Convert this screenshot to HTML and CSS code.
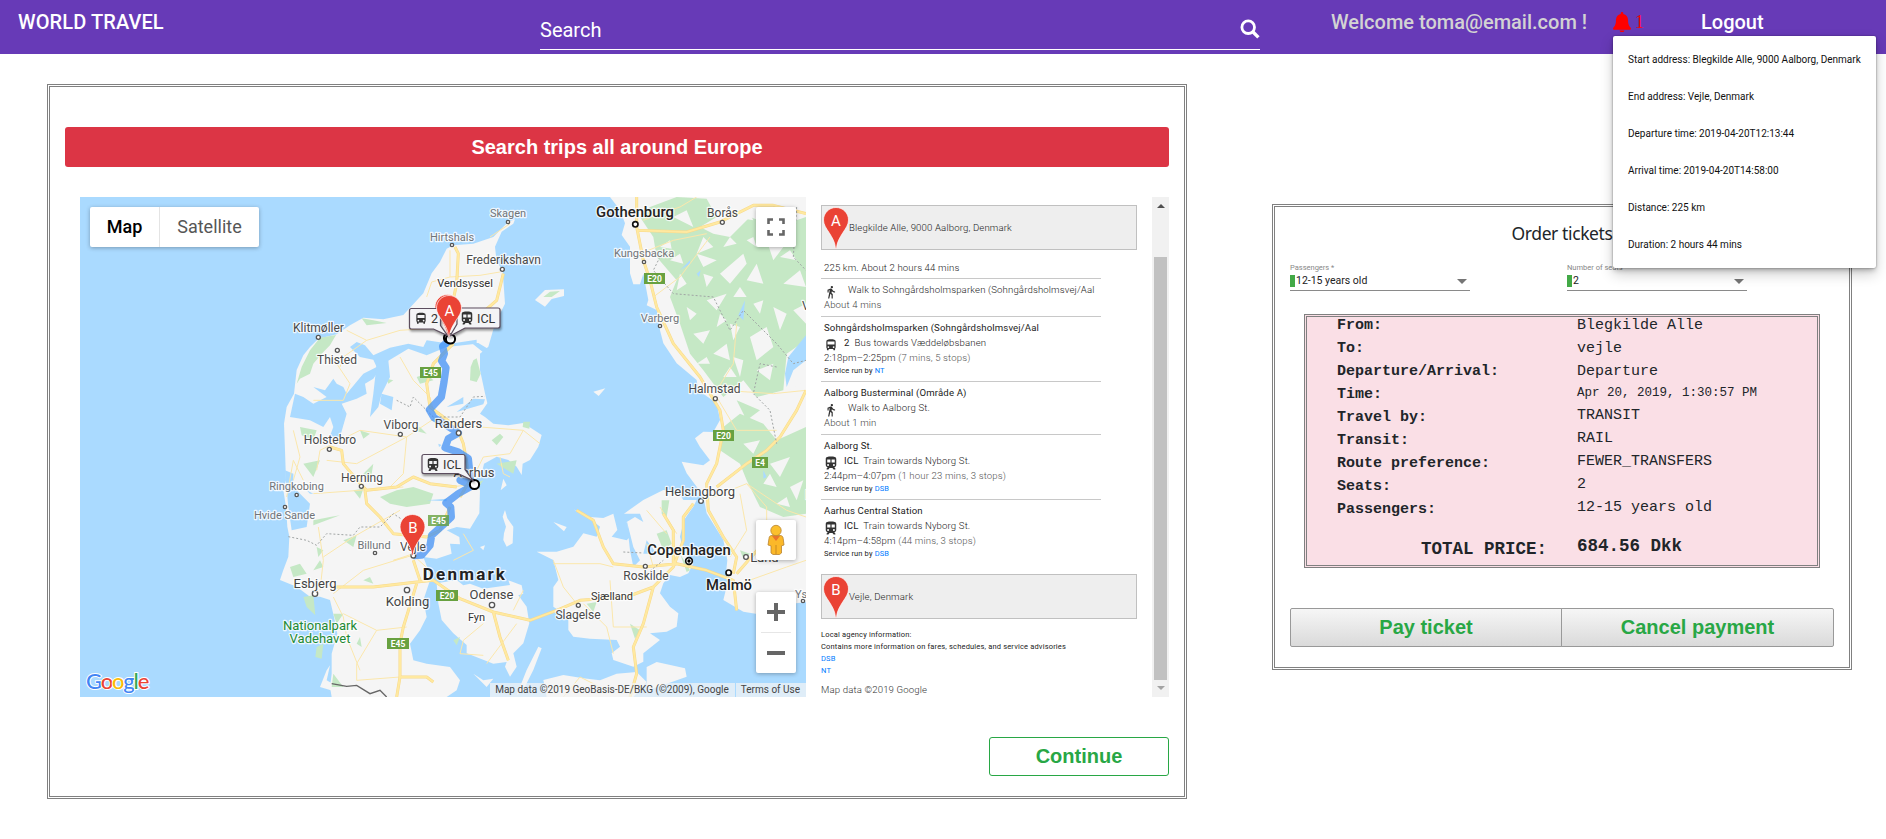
FILE: index.html
```html
<!DOCTYPE html>
<html lang="en">
<head>
<meta charset="utf-8">
<title>World Travel</title>
<link rel="stylesheet" href="styles.css">
</head>
<body>
<svg width="0" height="0" class="defs">
  <defs>
    <symbol id="bus" viewBox="0 0 24 24"><path d="M4 16c0 .9.4 1.700 1 2.200V20c0 .6.4 1 1 1h1c.6 0 1-.4 1-1v-1h8v1c0 .6.4 1 1 1h1c.6 0 1-.4 1-1v-1.800c.6-.5 1-1.300 1-2.200V6c0-3.500-3.600-4-8-4s-8 .5-8 4v10zm3.500 1a1.500 1.500 0 1 1 0-3 1.500 1.500 0 0 1 0 3zm9 0a1.500 1.500 0 1 1 0-3 1.500 1.500 0 0 1 0 3zM18 11H6V6h12v5z"/></symbol>
    <symbol id="train" viewBox="0 0 24 24"><path d="M3 15.500C3 17.400 4.600 19 6.500 19L4.500 21.500v1.500h3l2-2.500h5l2 2.500h3v-1.500L17.500 19c1.900 0 3.500-1.600 3.500-3.500V5c0-3.500-4-4-9-4s-9 .5-9 4v10.500zM7 17a1.700 1.700 0 1 1 0-3.400A1.700 1.700 0 0 1 7 17zm10 0a1.700 1.700 0 1 1 0-3.400 1.700 1.700 0 0 1 0 3.400zM11 11H5.500V6H11v5zm7.500 0H13V6h5.500v5z"/></symbol>
    <symbol id="walk" viewBox="0 0 24 24"><path d="M13.500 5.500a2 2 0 1 0 0-4 2 2 0 0 0 0 4zM9.800 8.900L7 23h2.100l1.800-8 2.100 2v6h2v-7.500l-2.100-2 .6-3C14.800 12 16.800 13 19 13v-2c-1.900 0-3.500-1-4.300-2.400l-1-1.600c-.4-.6-1-1-1.700-1-.3 0-.5.1-.8.1L6 8.300V13h2V9.600l1.800-.7"/></symbol>
    <symbol id="pin" viewBox="0 0 26 42"><path d="M13 .5C6 .5.5 6 .5 13c0 4.500 2.500 8 5.500 12.500 3.500 5.500 6 9.500 6.500 16h1c.5-6.500 3-10.500 6.500-16C23 21 25.500 17.500 25.500 13 25.500 6 20 .5 13 .5z" fill="#ea4335" stroke="#fff" stroke-width=".7"/></symbol>
  </defs>
</svg>

<header class="topbar">
  <div class="brand">WORLD TRAVEL</div>
  <div class="search">
    <span>Search</span>
    <svg class="search-icon" viewBox="0 0 20 20"><circle cx="8.200" cy="8.200" r="6.300" fill="none" stroke="#fff" stroke-width="2.800"/><path d="M12.800 12.800L18.400 18.400" stroke="#fff" stroke-width="3.400"/></svg>
  </div>
  <div class="welcome">Welcome toma@email.com !</div>
  <div class="bell">
    <svg viewBox="0 0 18 20"><path d="M9 0c-.8 0-1.300.6-1.300 1.300v.6C4.800 2.500 3 4.800 3 7.600c0 5-1.200 6.500-2.500 8-.9 1-.3 2.200.7 2.200h15.600c1 0 1.600-1.200.7-2.200-1.300-1.500-2.500-3-2.500-8 0-2.800-1.800-5.100-4.700-5.700v-.6C10.300.6 9.800 0 9 0zM6.600 18.600a2.400 1.600 0 0 0 4.800 0z" fill="red"/></svg>
    <span>1</span>
    <div class="menu">
      <div>Start address: Blegkilde Alle, 9000 Aalborg, Denmark</div>
      <div>End address: Vejle, Denmark</div>
      <div>Departure time: 2019-04-20T12:13:44</div>
      <div>Arrival time: 2019-04-20T14:58:00</div>
      <div>Distance: 225 km</div>
      <div>Duration: 2 hours 44 mins</div>
    </div>
  </div>
  <div class="logout">Logout</div>
</header>

<main class="page">
  <section class="trips">
    <h1 class="banner">Search trips all around Europe</h1>
    <div class="trip-body">
      <div class="map">
        <svg class="map-art" width="726" height="500" viewBox="0 0 726 500">
          <rect width="726" height="500" fill="#aadaff"/>
          <g transform="scale(.33333)">
            <g fill="#f5f5f5">
              <path d="M1305 67L1285 74 1240 120 1180 140 1120 145 1100 155 1080 195 1055 229 1030 289 970 354 910 367 850 362 810 385 770 412 715 425 690 450 670 475 650 519 642 590 620 630 612 680 615 760 618 850 610 879 618 929 622 989 628 1019 625 1079 610 1119 600 1149 650 1169 690 1199 720 1199 750 1209 762 1260 772 1310 755 1370 755 1430 750 1470 755 1500H1100L1130 1480 1140 1450 1110 1410 1040 1400 1000 1390 990 1340 1020 1300 1040 1260 1030 1210 1040 1180 1050 1150 1045 1120 1030 1080 1070 1085 1115 1070 1110 1040 1140 1042 1138 1020 1100 1000 1130 990 1170 995 1198 949 1200 880 1185 850 1205 830 1212 800 1250 779 1285 789 1310 809 1325 834 1328 800 1350 789 1375 749 1385 714 1330 678 1285 685 1240 680 1215 660 1200 650 1222 619 1215 589 1200 519 1200 470 1225 449 1245 380 1275 320 1268 219 1250 194 1245 149 1265 104 1300 80Z"/>
              <path d="M1070 1159L1130 1149 1150 1165 1170 1160 1210 1175 1290 1164 1285 1150 1325 1165 1330 1190 1315 1195 1340 1229 1348 1279 1330 1339 1300 1369 1310 1409 1290 1439 1275 1409 1280 1395 1240 1400 1160 1369 1160 1344 1120 1309 1085 1269 1075 1219Z"/>
              <path d="M1375 1349L1385 1354 1360 1419 1330 1479 1310 1495 1340 1419ZM1275 939L1282 964 1300 989 1298 1039 1280 1049 1270 1029 1272 1009 1278 989 1268 959ZM1270 845L1280 865 1262 880ZM1365 309L1395 279 1452 277 1452 297 1415 306 1395 329ZM1540 584L1576 574 1556 597ZM1420 975L1460 990 1452 1003ZM1200 1050L1215 1045 1210 1060ZM740 1420L750 1405 740 1450 790 1480 770 1485 720 1470ZM1180 1430L1210 1450 1240 1445 1220 1470Z"/>
              <path d="M1480 937L1530 960 1570 963 1600 950 1612 999 1595 1019 1640 1030 1650 1020 1640 975 1665 960 1690 975 1680 950 1632 950 1690 909 1750 879 1795 885 1810 909 1850 909 1840 929 1812 969 1800 1019 1810 1059 1840 1099 1825 1129 1800 1140 1770 1134 1750 1159 1740 1189 1770 1229 1795 1249 1790 1289 1760 1304 1710 1309 1740 1329 1690 1369 1690 1394 1660 1409 1600 1389 1595 1369 1620 1349 1610 1329 1530 1325 1480 1319 1465 1299 1465 1260 1450 1249 1420 1229 1420 1170 1435 1149 1420 1089 1370 1064 1430 1064 1480 1049 1510 1009 1550 1019 1560 989 1535 969Z"/>
              <path d="M1390 1449L1450 1434 1510 1444 1560 1450 1610 1430 1670 1425 1700 1455 1660 1500H1400ZM1700 1410L1730 1395 1815 1414 1820 1439 1750 1464 1700 1480Z"/>
              <path d="M1590 0L1620 39 1635 79 1625 114 1650 149 1650 229 1660 262 1680 262 1690 230 1705 309 1700 325 1730 339 1740 400 1750 439 1790 499 1850 549 1855 580 1910 619 1920 669 1900 705 1870 704 1845 724 1860 750 1890 790 1870 805 1805 794 1820 829 1850 869 1870 899 1880 949 1930 1029 1942 1089 1938 1129 1945 1149 1930 1209 1990 1244 2050 1254 2100 1225 2178 1215V0Z"/>
            </g>
            <g fill="#c5e8c5">
              <path d="M1790 0L1880 5 1910 60 1860 90 1900 110 1950 120 2010 60 2090 90 2178 60V430L2120 470 2110 580 2030 600 1990 550 1930 600 1870 520 1830 470 1800 380 1770 300 1790 250 1730 180 1720 120 1680 60 1710 30Z"/>
              <path d="M1930 690L1980 650 2050 680 2090 730 2178 690V950L2110 960 2040 930 2000 850 1980 800 1920 760ZM1970 610L2040 640 2000 670Z"/>
              <path d="M720 422L768 414 750 445 725 470 700 500 690 530 660 545 650 560 665 510 690 460ZM845 364L880 370 920 378 860 385ZM1180 490L1190 484 1202 530 1190 555 1170 550 1172 510Z"/>
              <path d="M660 690L710 700 700 730 665 715ZM670 800L720 790 700 840ZM850 830L880 800 870 860ZM900 900L950 880 1000 870 1060 890 1050 920 980 930 930 920ZM700 970L750 960 780 955 700 985ZM790 1030L830 1015 820 1050ZM630 1110L660 1100 680 1130 640 1140ZM670 1200L700 1195 706 1255 680 1230ZM710 1350L730 1340 725 1385 706 1380ZM760 1430L790 1470 755 1470ZM760 1250L790 1250 770 1280ZM820 880L850 875 840 905ZM710 1050L730 1060 715 1080ZM1235 730L1260 710 1270 720 1250 745ZM1330 674L1350 674 1348 695 1328 690ZM1250 800L1310 790 1300 830ZM1745 910L1768 910 1760 960 1745 950ZM1520 1220L1550 1215 1540 1245ZM1650 1280L1680 1300 1665 1325ZM1210 55L1220 60ZM1240 100L1250 110ZM1010 540L1040 530 1060 550 1020 560ZM1800 1070L1830 1120 1820 1125ZM840 700L870 710 850 725ZM920 545L940 550 925 560ZM1390 300L1410 284 1440 282 1415 300Z"/>
              <path d="M1730 1010L1760 1000 1775 1040 1750 1060ZM880 520L900 500 905 520ZM1000 700L1020 690 1040 710ZM1180 860L1210 850 1190 880ZM700 1120L720 1090 730 1110ZM850 1150L870 1140 880 1160ZM1980 1060L2010 1070 1990 1085ZM1120 1330L1140 1320 1130 1345ZM1400 1200L1420 1215ZM830 1340L840 1320 845 1350Z"/>
            </g>
            <g fill="#f5f5f5">
              <path d="M1850 170l60 20-40 20zM1920 230l70-60 10 30-50 60zM1780 60l40-20 20 50zM2000 250l30-50 20 60zM2060 130l50 20-30 40zM2110 260l50-40 18 50zM1880 310l60-20-30 50zM1950 380l30 10-20 40zM1840 410l50-10-20 40zM1900 470l40-30 10 50zM2010 420l50-30 20 60-50 40zM2080 330l40 20-20 50zM2030 520l50-20-10 50zM1800 230l20 30-30 20zM1870 120l30 30-50 20zM2130 490l48-60v120l-50 30zM1990 740l50-10-20 40zM2070 800l60-20-30 60zM2130 870l40-20-20 60zM1960 480l30 10-10 50zM2060 20l60 20-30 40zM1960 60l40-30 20 40zM1930 150l20-30 20 20zM2020 320l30-10-10 40zM1820 330l30 20-20 20zM1920 350l20 20-30 20z"/>
              <path d="M2100 180l30-20 20 30zM2140 340l38-20v60zM1770 190l30-20 10 30zM1870 230l30 10-20 30zM1960 300l20-30 20 30zM1740 150l30-20 5 25zM2000 130l20-10 10 30zM1850 500l30-20 10 20zM1930 540l20-30 20 30zM2050 860l20-30 20 40zM2090 920l30-20 10 30z"/>
            </g>
            <g fill="#aadaff">
              <path d="M1190 428L1110 440 1040 430 1030 450 985 440 930 452 880 475 855 445 830 435 810 450 840 480 880 488 890 510 850 530 825 560 800 590 790 570 770 560 760 545 735 580 700 570 740 600 700 620 670 600 645 590 630 660 690 670 730 690 750 660 760 690 745 730 780 720 800 650 785 620 830 605 860 590 855 560 880 545 910 500 960 470 985 455 1040 475 1100 450 1190 440Z"/>
              <path d="M890 500L925 490 930 540 905 590 895 630 870 660 880 590ZM905 590L940 600 935 640 900 620ZM1175 438L1195 438 1240 465 1215 470ZM1130 645L1180 605 1215 607 1210 622ZM615 820L640 830 640 870 690 920 680 990 635 1000 625 930ZM690 890L680 880 700 890ZM1100 630L1150 600 1150 620Z"/>
              <path d="M1640 970L1660 1050 1680 1090 1660 1110 1650 1060ZM1700 1030L1730 1070 1690 1070ZM1975 355L1995 310 1990 370ZM2115 530L2125 480 2178 415V490L2140 520 2120 570ZM1800 220L1830 190 1830 200ZM2050 820l10 20-10 5zM1850 230l12-10-5 20zM1870 1050l10 30-8 10zM1040 910l60-5v8zM1075 740l10 4-8 6z"/>
            </g>
            <g class="roads-minor">
              <path d="M1110 160V240L1055 255 1040 300M1110 240L1200 235 1260 225M1230 120L1290 80M800 400L860 430 960 400 1040 395M860 430L790 480 780 510M770 500L810 560 790 610 700 610M960 480L1000 550 1050 600 1060 640M710 820L720 760 840 700 980 720M980 720L1070 660M980 720L970 830 930 870M980 720L830 800 740 790M700 890L840 880 970 870M715 990L730 1090 720 1180M730 1080L820 1020 960 940M760 1190L850 1120 980 1080M760 1200L790 1260 800 1320 840 1420M790 1250L890 1300 980 1290M890 1300L830 1400 830 1450 960 1440M1000 1070L940 1090 1000 1075 1060 1130M620 900L640 790 670 850M1100 680L1200 690 1330 700 1380 740M1170 860L1210 780 1290 770 1330 700M1110 870L1200 860M1150 1010L1180 1060 1120 1090M1210 1280L1150 1330 1140 1370 1210 1375M1310 1280L1220 1400M1330 1180L1300 1240M1420 1100L1560 1100 1600 1110M1420 1090L1450 1170 1490 1220M1590 1150L1600 1290 1700 1290M1510 1220L1580 1290 1600 1370M1740 930L1790 1010M1700 940L1760 1010M1450 1500L1500 1440 1560 1470M2178 580L2080 590 1930 580M1690 70L1740 50 1800 30 1850 0M1680 170L1780 130 1880 110M1720 300L1800 240 1890 120M1910 580L1960 500 1970 380M1910 600L1970 700 2090 700M1900 900L2000 860 2060 930 2060 1090M2000 860L2120 940 2178 960M1950 1080L2000 1000 1980 890M1980 1160L2120 1110 2178 1090M1700 1040L1720 1110M1260 780L1270 830 1290 840M640 700L660 780 640 850"/>
            </g>
            <g class="roads-case"><path id="r1" d="M1125 150L1135 170 1130 260 1115 330M1270 230L1250 310 1210 345 1150 370M1120 440L1060 500 1040 560 1050 630 1130 690 1150 740 1170 850 1140 900M750 750L785 760 790 800 840 860 860 880 950 870 1000 840 1050 860 1130 870M855 880L860 920 900 960 940 1010 1040 1020 1080 1000 1110 930M760 1170L880 1170 1010 1155 1060 1150 1140 1205 1240 1245 1350 1270 1430 1240 1500 1210 1640 1200 1720 1170M1010 1160L970 1290 960 1340 960 1440 950 1500M960 1440L1040 1440 1060 1455M1000 1090L1020 1150M1240 1245L1260 1320 1285 1390M1490 940L1540 970 1570 1050 1600 1100 1690 1110 1790 1100 1880 1120 1960 1150 1970 1240M1840 920L1810 960 1810 1030 1780 1110 1720 1170 1690 1280 1660 1350 1670 1430 1650 1500M1750 950L1780 1000 1780 1100M1670 0L1670 90 1690 190 1710 250 1730 330 1780 440 1860 540 1920 640 1930 700 1910 800 1880 860 1885 940 1930 1020 1970 1080 1960 1130M1670 100L1820 105 1920 75 2020 25 2080 25 2178 50M1910 870L2000 800 2060 760 2100 720 2150 640 2178 580M1970 1130L2040 1050"/></g>
            <use href="#r1" class="roads"/>
            <path class="boundary" d="M625 1019L680 1030 710 1045 740 1010 820 1015 840 990 900 990 940 950 1000 990M950 610L990 630 1000 600 1060 660 1140 660 1180 600 1215 598M1740 180L1720 220 1780 290 1900 300 1950 400 1990 340 2090 440 2140 500 2178 490M2150 30L2140 180 2178 220M2090 510L2040 500 2020 590 2070 640 2090 740M1700 1130L1750 1090M1630 1065L1690 1068"/>
            <path d="M755 1460L800 1468 830 1465 870 1490 900 1480 920 1500" fill="none" stroke="#666" stroke-width="4"/>
            <path class="route" d="M1108 430L1088 448 1093 470 1085 492 1098 512 1092 555 1084 600 1070 615 1048 638 1062 662 1100 685 1135 708 1105 725 1095 752 1135 765 1165 785 1172 850 1140 850 1178 866 1135 890 1098 918 1112 930 1114 960 1088 985 1055 1015 1050 1045 1025 1074 1000 1076"/>
            <g fill="#fff" stroke="#555" stroke-width="4">
              <circle cx="1284" cy="75" r="5"/><circle cx="1116" cy="144" r="5"/><circle cx="1267" cy="217" r="6"/><circle cx="715" cy="421" r="6"/><circle cx="772" cy="460" r="6"/><circle cx="961" cy="712" r="6"/><circle cx="1136" cy="708" r="7"/><circle cx="748" cy="757" r="6"/><circle cx="844" cy="868" r="6"/><circle cx="650" cy="894" r="5"/><circle cx="615" cy="930" r="5"/><circle cx="885" cy="1068" r="5"/><circle cx="705" cy="1190" r="8"/><circle cx="981" cy="1179" r="8"/><circle cx="1236" cy="1224" r="8"/><circle cx="1495" cy="1225" r="6"/><circle cx="1696" cy="1108" r="6"/><circle cx="1863" cy="912" r="7"/><circle cx="1998" cy="1080" r="7"/><circle cx="2169" cy="1212" r="5"/><circle cx="1906" cy="605" r="6"/><circle cx="1740" cy="387" r="5"/><circle cx="1692" cy="195" r="5"/><circle cx="1927" cy="76" r="6"/><circle cx="1000" cy="1076" r="7"/>
            </g>
            <g fill="#fff" stroke="#111" stroke-width="5"><circle cx="1666" cy="82" r="8"/><circle cx="1946" cy="1127" r="8"/><circle cx="1827" cy="1092" r="10"/></g>
            <circle cx="1827" cy="1092" r="5"/>
          </g>
          <g class="labels">
            <text x="428" y="20" class="s">Skagen</text><text x="372" y="44" class="s">Hirtshals</text><text x="423.500" y="67">Frederikshavn</text><text x="385" y="90" class="n">Vendsyssel</text>
            <text x="238.500" y="135">Klitmøller</text><text x="257" y="167">Thisted</text><text x="321" y="232">Viborg</text><text x="378.500" y="231" class="m">Randers</text><text x="250" y="247">Holstebro</text><text x="282" y="285">Herning</text><text x="216.500" y="293" class="s">Ringkobing</text><text x="204.500" y="322" class="s">Hvide Sande</text><text x="294" y="352" class="s">Billund</text><text x="333" y="354">Vejle</text><text x="394" y="280" class="m">Aarhus</text>
            <text x="235" y="391" class="m">Esbjerg</text><text x="327.500" y="409" class="m">Kolding</text><text x="240" y="433" class="g">Nationalpark</text><text x="240" y="446" class="g">Vadehavet</text><text x="385" y="383" class="c">Denmark</text><text x="411.500" y="402" class="m">Odense</text><text x="396.500" y="424" class="n">Fyn</text><text x="498" y="422">Slagelse</text><text x="532" y="403" class="n">Sjælland</text><text x="566" y="383">Roskilde</text><text x="609" y="358" class="b">Copenhagen</text><text x="620" y="299" class="m">Helsingborg</text><text x="649" y="393" class="b">Malmö</text><text x="684.500" y="365" class="m">Lund</text><text x="634.500" y="196">Halmstad</text><text x="580" y="125" class="s">Varberg</text><text x="564" y="60" class="s">Kungsbacka</text><text x="555" y="20" class="b">Gothenburg</text><text x="642.500" y="20">Borås</text><text x="729" y="401" class="s">Ystad</text><text x="731" y="302">Kr</text><text x="729" y="113">Vä</text>
          </g>
          <g class="shields">
            <rect x="340" y="170" width="21" height="11"/><text x="350.500" y="179">E45</text><rect x="564" y="76" width="21" height="11"/><text x="574.500" y="85">E20</text><rect x="633" y="233" width="21" height="11"/><text x="643.500" y="242">E20</text><rect x="672" y="260" width="16" height="11"/><text x="680" y="269">E4</text><rect x="348" y="318" width="21" height="11" opacity=".8"/><text x="358.500" y="327">E45</text><rect x="356" y="393" width="22" height="11"/><text x="367" y="402">E20</text><rect x="307" y="441" width="22" height="11"/><text x="318" y="450">E45</text>
          </g>
          <g fill="#fff" stroke="#000" stroke-width="1.500"><circle cx="368.500" cy="141" r="4.600" stroke-width="2"/><circle cx="370.500" cy="142" r="4.600" stroke-width="2"/><circle cx="394.500" cy="287.500" r="4.600" stroke-width="2"/></g>
          <use href="#pin" x="354.500" y="97" width="26" height="42"/>
          <g class="tags">
            <path d="M331.500 111.500h27a2 2 0 0 1 2 2v15l7 10-14-6.500h-22a2 2 0 0 1-2-2v-16.500a2 2 0 0 1 2-2z"/>
            <path d="M379 111h39a2 2 0 0 1 2 2v16a2 2 0 0 1-2 2h-33l-15 8 7-12v-14a2 2 0 0 1 2-2z"/>
          </g>
          <use href="#pin" x="356" y="98" width="26" height="42"/>
          <path class="tag" d="M344 257.500h39a2 2 0 0 1 2 2v13l8 11-15-7h-34a2 2 0 0 1-2-2v-15a2 2 0 0 1 2-2z"/>
          <use href="#pin" x="319.500" y="317" width="26" height="42"/>
          <use href="#bus" x="334" y="114.500" width="14" height="14" fill="#333"/><use href="#train" x="380" y="114" width="14" height="14" fill="#333"/><use href="#train" x="346" y="260.500" width="14" height="14" fill="#333"/>
          <g class="tag-text"><text x="351" y="126">2</text><text x="397" y="125.500">ICL</text><text x="363" y="272">ICL</text></g>
          <g class="pin-text"><text x="369.500" y="118.500">A</text><text x="333" y="335.500">B</text></g>
          <text x="6" y="492" class="logo"><tspan fill="#4285f4">G</tspan><tspan fill="#ea4335">o</tspan><tspan fill="#fbbc05">o</tspan><tspan fill="#4285f4">g</tspan><tspan fill="#34a853">l</tspan><tspan fill="#ea4335">e</tspan></text>
        </svg>
        <div class="map-type"><span class="on">Map</span><span>Satellite</span></div>
        <div class="ctl full"><svg viewBox="0 0 18 18"><path d="M1.500 6V1.500H6M12 1.500h4.500V6M16.500 12v4.500H12M6 16.500H1.500V12" fill="none" stroke="#666" stroke-width="2.600"/></svg></div>
        <div class="ctl person"><svg viewBox="0 0 18 32"><path d="M5 11.500h8c2 0 3 1 3.200 3l.8 6.500-2.500.8V29l-2 1.500H6L4 29v-7.200L1 21l1-6.500c.2-2 1-3 3-3z" fill="#fbb829" stroke="#b88330" stroke-width=".8"/><path d="M5 12h8l-4 5z" fill="#e9742b"/><circle cx="9" cy="6.500" r="5.200" fill="#fbc02d" stroke="#b88330" stroke-width=".8"/><path d="M9 21v9" stroke="#c98a20"/></svg></div>
        <div class="ctl zoom"><svg viewBox="0 0 40 81"><path d="M11 20h18M20 11v18M11 61h18" stroke="#666" stroke-width="4"/><path d="M5 40.500h30" stroke="#e6e6e6"/></svg></div>
        <div class="attrib"><span>Map data ©2019 GeoBasis-DE/BKG (©2009), Google</span><span>Terms of Use</span></div>
      </div>

      <div class="directions">
        <div class="dir-content">
          <div class="place"><svg viewBox="0 0 26 42"><use href="#pin"/><text x="13" y="18.500">A</text></svg><span>Blegkilde Alle, 9000 Aalborg, Denmark</span></div>
          <div class="summary">225 km. About 2 hours 44 mins</div>
          <div class="step"><div class="go walk"><svg><use href="#walk"/></svg>Walk to Sohngårdsholmsparken (Sohngårdsholmsvej/Aal</div><div class="dim">About 4 mins</div></div>
          <div class="step"><div class="stop">Sohngårdsholmsparken (Sohngårdsholmsvej/Aal</div><div class="go"><svg><use href="#bus"/></svg><b>2</b>&nbsp; Bus towards Væddeløbsbanen</div><div>2:18pm–2:25pm <i>(7 mins, 5 stops)</i></div><div class="svc">Service run by <a>NT</a></div></div>
          <div class="step"><div class="stop">Aalborg Busterminal (Område A)</div><div class="go walk"><svg><use href="#walk"/></svg>Walk to Aalborg St.</div><div class="dim">About 1 min</div></div>
          <div class="step"><div class="stop">Aalborg St.</div><div class="go"><svg><use href="#train"/></svg><b>ICL</b>&nbsp; Train towards Nyborg St.</div><div>2:44pm–4:07pm <i>(1 hour 23 mins, 3 stops)</i></div><div class="svc">Service run by <a>DSB</a></div></div>
          <div class="step"><div class="stop">Aarhus Central Station</div><div class="go"><svg><use href="#train"/></svg><b>ICL</b>&nbsp; Train towards Nyborg St.</div><div>4:14pm–4:58pm <i>(44 mins, 3 stops)</i></div><div class="svc">Service run by <a>DSB</a></div></div>
          <div class="place last"><svg viewBox="0 0 26 42"><use href="#pin"/><text x="13" y="18.500">B</text></svg><span>Vejle, Denmark</span></div>
          <div class="agency"><div>Local agency information:</div><div>Contains more information on fares, schedules, and service advisories</div><div><a>DSB</a></div><div><a>NT</a></div></div>
          <div class="credit">Map data ©2019 Google</div>
        </div>
        <div class="scroll"><span class="up"></span><span class="thumb"></span><span class="down"></span></div>
      </div>
    </div>
    <button class="continue">Continue</button>
  </section>

  <section class="order">
    <h2>Order tickets</h2>
    <div class="fields">
      <div class="field"><label>Passengers *</label><div class="value">12-15 years old</div></div>
      <div class="field"><label>Number of seats</label><div class="value">2</div></div>
    </div>
    <div class="ticket">
      <div class="keys"><div>From:</div><div>To:</div><div>Departure/Arrival:</div><div>Time:</div><div>Travel by:</div><div>Transit:</div><div>Route preference:</div><div>Seats:</div><div>Passengers:</div><div class="total">TOTAL PRICE:</div></div>
      <div class="vals"><div>Blegkilde Alle</div><div>vejle</div><div>Departure</div><div class="time">Apr 20, 2019, 1:30:57 PM</div><div>TRANSIT</div><div>RAIL</div><div>FEWER_TRANSFERS</div><div>2</div><div>12-15 years old</div><div class="total">684.56 Dkk</div></div>
    </div>
    <div class="actions"><button>Pay ticket</button><button>Cancel payment</button></div>
  </section>
</main>
</body>
</html>
```
FILE: styles.css
```css
* { box-sizing: border-box; }
body { margin: 0; background: #fff; font-family: Roboto, "Liberation Sans", sans-serif; color: #212529; overflow: hidden; }
.defs { display: block; }
.topbar { height: 54px; background: #673ab7; display: flex; color: #fff; font-size: 20px; font-weight: 500; line-height: 24px; white-space: nowrap; padding: 10px 0 0 18px; }
.brand { width: 522px; letter-spacing: .1px; }
.search { width: 720px; height: 40px; border-bottom: 1px solid #fff; display: flex; justify-content: space-between; padding-top: 8px; font-weight: 400; }
.search-icon { width: 20px; height: 20px; margin-top: 1px; }
.welcome { margin-left: 71px; width: 282px; color: #d3d3d3; }
.bell { width: 88px; position: relative; display: flex; gap: 4px; color: red; font: 18px/24px "Liberation Serif", serif; }
.bell svg { width: 18px; height: 20px; margin-top: 2px; }
.menu { position: absolute; left: 0; top: 26px; z-index: 5; width: 263px; height: 232px; background: #fff; border-radius: 2px; padding: 5px 15px; color: #111; font: 10px/37px Roboto, sans-serif; box-shadow: 0 3px 5px -1px rgba(0,0,0,.25), 0 0 2px rgba(0,0,0,.4), 0 6px 14px rgba(0,0,0,.2); }
.page { display: flex; align-items: flex-start; padding: 30px 0 0 47px; gap: 85px; }
.trips { width: 1140px; height: 715px; border: 3px double #808080; padding: 40px 15px 0; display: flex; flex-direction: column; }
.banner { margin: 0; height: 40px; background: #dc3545; border-radius: 3px; color: #fff; text-align: center; font: bold 20px/40px "Liberation Sans", sans-serif; }
.trip-body { display: flex; margin: 30px 0 0 15px; height: 500px; }
.map { position: relative; width: 726px; height: 500px; overflow: hidden; }
.map-art { display: block; }
.roads-minor, .roads-case, .roads { fill: none; stroke-linejoin: round; }
.roads-minor { stroke: #fbe7ac; stroke-width: 3; }
.roads-case { stroke: #f8d98a; stroke-width: 9; }
.roads { stroke: #ffe9a0; stroke-width: 6; }
.boundary { fill: none; stroke: #a0a4a4; stroke-width: 3; stroke-dasharray: 6 6; }
.route { fill: none; stroke: #3b8df5; stroke-opacity: .72; stroke-width: 22; stroke-linejoin: round; }
.labels text { font: 12px Roboto, sans-serif; fill: #4a4a4a; text-anchor: middle; stroke: #fff; stroke-opacity: .8; stroke-width: 2.5px; paint-order: stroke; stroke-linejoin: round; }
.labels .s { font-size: 11px; fill: #707478; }
.labels .n { font-size: 11px; fill: #333; }
.labels .m { font-size: 13px; fill: #444; }
.labels .b { font-size: 14.8px; font-weight: 500; fill: #222; }
.labels .g { font-size: 13px; fill: #1e8a34; }
.labels .c { font-size: 17px; font-weight: 700; letter-spacing: 2.2px; fill: #222; }
.shields rect { fill: #68a140; }
.shields text { font: bold 8.5px Roboto, sans-serif; fill: #fff; text-anchor: middle; }
.tags path, .tag { fill: #f4f4f6; stroke: #5c4d5e; stroke-width: 1.2; filter: drop-shadow(1px 2px 1px rgba(0,0,0,.4)); }
.tag-text text { font: 12.5px Roboto, sans-serif; fill: #333; }
.pin-text text { font: 15px Roboto, sans-serif; fill: #fff; text-anchor: middle; }
.logo { font: 22px Lato, sans-serif; font-weight: 500; letter-spacing: -1.2px; stroke: #fff; stroke-width: 2px; paint-order: stroke; }
.map-type { position: absolute; left: 10px; top: 10px; display: flex; height: 40px; background: #fff; border-radius: 2px; box-shadow: 0 1px 4px rgba(0,0,0,.3); font-size: 18px; line-height: 39px; color: #565656; }
.map-type span { width: 99px; text-align: center; }
.map-type .on { width: 70px; color: #000; font-weight: 500; border-right: 1px solid #e4e4e4; }
.ctl { position: absolute; left: 676px; width: 40px; height: 40px; background: #fff; border-radius: 2px; box-shadow: 0 1px 4px rgba(0,0,0,.3); display: flex; align-items: center; justify-content: center; }
.full { top: 10px; }
.full svg { width: 18px; height: 18px; }
.person { top: 323px; }
.person svg { width: 18px; height: 32px; }
.zoom { top: 395px; height: 81px; }
.zoom svg { width: 40px; height: 81px; }
.attrib { position: absolute; right: 0; bottom: 0; display: flex; height: 14px; font-size: 10px; line-height: 14px; color: #444; background: rgba(245,245,245,.7); white-space: nowrap; }
.attrib span { padding: 0 6px 0 5px; }
.attrib span + span { border-left: 1px solid #aadaff; }
.directions { flex: 1; display: flex; justify-content: space-between; overflow: hidden; padding-left: 15px; }
.dir-content { width: 316px; padding-top: 8px; font-size: 9.6px; line-height: 15px; font-weight: 300; letter-spacing: .14px; color: #222; white-space: nowrap; }
.dir-content a { color: #007bff; }
.place { height: 45px; border: 1px solid #c0c0c0; background: #eee; display: flex; align-items: center; padding-left: 1px; }
.place svg { width: 26px; height: 42px; }
.place text { font: 15px Roboto, sans-serif; fill: #fff; text-anchor: middle; }
.summary { padding: 10px 0 3px 3px; }
.step { width: 280px; border-top: 1px solid #c8c8c8; padding: 3px 0 4px 3px; }
.step i { font-style: normal; color: #555; }
.step b { font-weight: 400; }
.dim { color: #444; }
.stop { color: #222; font-weight: 400; }
.go { display: flex; align-items: center; height: 15px; }
.go svg { width: 14px; height: 14px; fill: #333; margin-right: 6px; flex: none; position: relative; top: 2px; }
.walk svg { margin-right: 10px; }
.svc { font-size: 7.5px; line-height: 12px; color: #222; font-weight: 400; }
.last { margin-top: 10px; }
.agency { padding-top: 10px; font-size: 7.5px; line-height: 12px; letter-spacing: .17px; font-weight: 400; color: #222; }
.credit { padding-top: 5px; color: #333; }
.scroll { width: 17px; background: #f1f1f1; display: flex; flex-direction: column; align-items: center; }
.up, .down { width: 0; height: 0; border: 4px solid transparent; border-top: 0; border-bottom-color: #505050; }
.up { margin: 7px 0 49px; }
.down { border: 4px solid transparent; border-bottom: 0; border-top-color: #a3a3a3; margin-top: 6px; }
.thumb { width: 13px; height: 423px; background: #c1c1c1; }
.continue { align-self: flex-end; margin: 40px 0 0; width: 180px; height: 39px; background: #fff; border: 1px solid #28a745; border-radius: 3px; color: #28a745; font: bold 20px "Liberation Sans", sans-serif; padding: 0 0 1px; }
.order { width: 580px; height: 466px; margin-top: 120px; border: 3px double #808080; padding: 14px 15px 0; }
.order h2 { margin: 0; height: 24px; text-align: center; font: 17.5px/25px "Noto Sans", sans-serif; letter-spacing: -.4px; }
.fields { display: flex; gap: 97px; margin-top: 18px; }
.field { width: 180px; height: 28px; border-bottom: 1px solid #8a8a8a; }
.field label { display: block; font-size: 7.5px; line-height: 9px; color: #888; margin-bottom: 3px; }
.value { position: relative; height: 12px; border-left: 5px solid #43a947; font-size: 10.5px; line-height: 12px; padding-left: 1px; color: #222; }
.value::after { content: ""; position: absolute; right: 3px; top: 4px; border: 5px solid transparent; border-top-color: #757575; border-bottom: 0; }
.ticket { margin: 23px 14px 0; width: 516px; height: 254px; border: 3px double #808080; background: #fadfe6; padding-left: 30px; display: grid; grid-template-columns: 240px 1fr; font: 15px/23px "Liberation Mono", "Courier New", monospace; white-space: nowrap; }
.keys { font-weight: 600; margin-top: -3px; }
.keys .total { font: bold 17.5px/24px "Liberation Mono", monospace; padding: 16px 0 0 84px; }
.vals { margin-top: -3px; }
.vals .time { font-size: 12.5px; line-height: 21px; }
.vals .total { font: bold 17.5px/24px "Liberation Mono", monospace; padding-top: 15px; }
.actions { display: flex; margin-top: 40px; height: 39px; }
.actions button { width: 272px; border: 1px solid #999; border-radius: 2px 0 0 2px; background: linear-gradient(#f6f6f6, #dadada); color: #28a745; font: bold 20px "Liberation Sans", sans-serif; padding: 0; }
.actions button + button { width: 273px; margin-left: -1px; border-radius: 0 2px 2px 0; }
```
